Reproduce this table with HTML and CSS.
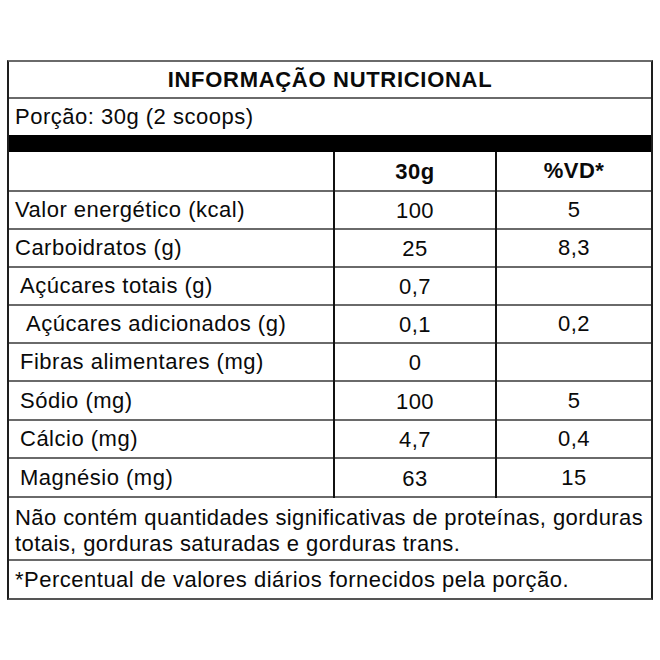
FILE: index.html
```html
<!DOCTYPE html>
<html lang="pt-BR">
<head>
<meta charset="utf-8">
<title>Informação Nutricional</title>
<link rel="stylesheet" href="styles.css">
</head>
<body>
<div class="label">
  <div class="title">INFORMAÇÃO NUTRICIONAL</div>
  <div class="portion">Porção: 30g (2 scoops)</div>
  <div class="bar"></div>
  <div class="row head">
    <div class="c name"></div>
    <div class="c val">30g</div>
    <div class="c vd">%VD*</div>
  </div>
  <div class="row">
    <div class="c name">Valor energético (kcal)</div>
    <div class="c val">100</div>
    <div class="c vd">5</div>
  </div>
  <div class="row">
    <div class="c name">Carboidratos (g)</div>
    <div class="c val">25</div>
    <div class="c vd">8,3</div>
  </div>
  <div class="row">
    <div class="c name ind1">Açúcares totais (g)</div>
    <div class="c val">0,7</div>
    <div class="c vd"></div>
  </div>
  <div class="row">
    <div class="c name ind2">Açúcares adicionados (g)</div>
    <div class="c val">0,1</div>
    <div class="c vd">0,2</div>
  </div>
  <div class="row">
    <div class="c name ind1">Fibras alimentares (mg)</div>
    <div class="c val">0</div>
    <div class="c vd"></div>
  </div>
  <div class="row tall">
    <div class="c name ind1">Sódio (mg)</div>
    <div class="c val">100</div>
    <div class="c vd">5</div>
  </div>
  <div class="row">
    <div class="c name ind1">Cálcio (mg)</div>
    <div class="c val">4,7</div>
    <div class="c vd">0,4</div>
  </div>
  <div class="row tall">
    <div class="c name ind1">Magnésio (mg)</div>
    <div class="c val">63</div>
    <div class="c vd">15</div>
  </div>
  <div class="note">Não contém quantidades significativas de proteínas, gorduras totais, gorduras saturadas e gorduras trans.</div>
  <div class="foot">*Percentual de valores diários fornecidos pela porção.</div>
</div>
</body>
</html>
```
FILE: styles.css
```css
html, body {
  margin: 0;
  padding: 0;
  background: #ffffff;
}
body {
  font-family: "Liberation Sans", Arial, sans-serif;
  font-size: 22px;
  color: #0a0a0a;
  letter-spacing: 0.5px;
}
.label {
  margin: 60px 0 0 7px;
  width: 646px;
  box-sizing: border-box;
  border-left: 2px solid #1e1e1e;
  border-right: 2px solid #1e1e1e;
  border-top: 2px solid #6a6a6a;
  border-bottom: 2px solid #555555;
}
.title {
  height: 37px;
  box-sizing: border-box;
  border-bottom: 2px solid #6a6a6a;
  display: flex;
  align-items: center;
  justify-content: center;
  font-weight: bold;
  letter-spacing: 0.7px;
  padding-top: 1px;
}
.portion {
  height: 36px;
  display: flex;
  align-items: center;
  padding-left: 6px;
}
.bar {
  height: 17px;
  background: #000000;
}
.row {
  display: grid;
  grid-template-columns: 324px 164px 1fr;
  height: 38px;
  box-sizing: border-box;
  border-bottom: 2px solid #6a6a6a;
}
.row.head {
  height: 40px;
  font-weight: bold;
}
.row.tall {
  height: 39px;
}
.c {
  display: flex;
  align-items: center;
  justify-content: center;
}
.c.name {
  justify-content: flex-start;
  padding-left: 6px;
}
.c.name.ind1 {
  padding-left: 11px;
}
.c.name.ind2 {
  padding-left: 17px;
}
.c.val {
  border-left: 2px solid #111111;
  border-right: 2px solid #111111;
  margin-bottom: -2px;
}
.note {
  height: 63px;
  box-sizing: border-box;
  border-bottom: 2px solid #6a6a6a;
  padding: 7px 0 0 6px;
  line-height: 26px;
  letter-spacing: 0.42px;
}
.foot {
  height: 37px;
  display: flex;
  align-items: center;
  padding-left: 6px;
}
```
